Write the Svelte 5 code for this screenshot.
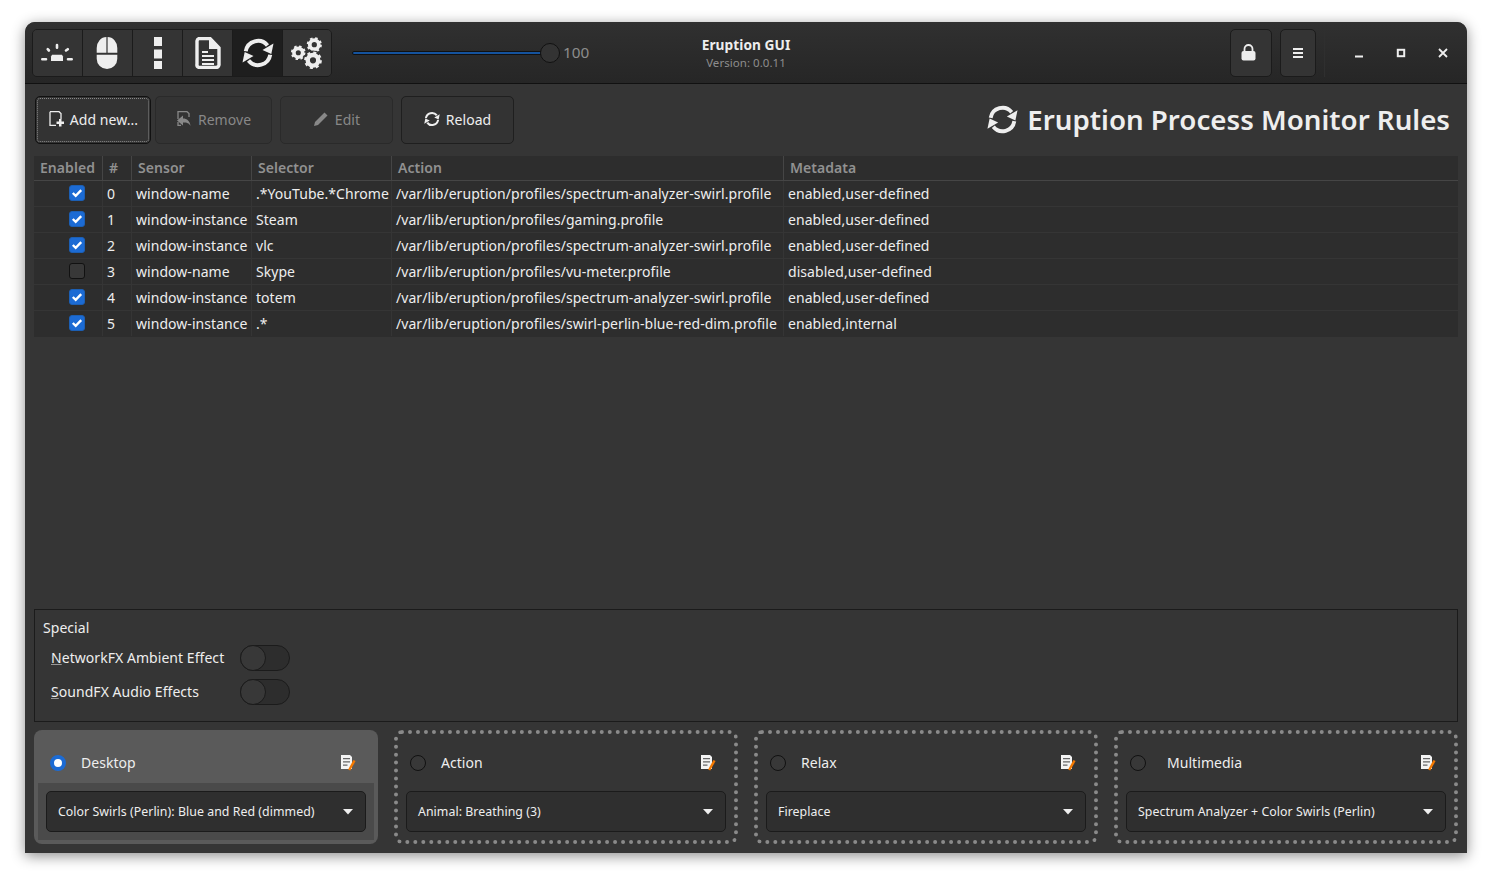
<script>
  const rows = [
    [true, 'window-name', '.*YouTube.*Chrome', '/var/lib/eruption/profiles/spectrum-analyzer-swirl.profile', 'enabled,user-defined'],
    [true, 'window-instance', 'Steam', '/var/lib/eruption/profiles/gaming.profile', 'enabled,user-defined'],
    [true, 'window-instance', 'vlc', '/var/lib/eruption/profiles/spectrum-analyzer-swirl.profile', 'enabled,user-defined'],
    [false, 'window-name', 'Skype', '/var/lib/eruption/profiles/vu-meter.profile', 'disabled,user-defined'],
    [true, 'window-instance', 'totem', '/var/lib/eruption/profiles/spectrum-analyzer-swirl.profile', 'enabled,user-defined'],
    [true, 'window-instance', '.*', '/var/lib/eruption/profiles/swirl-perlin-blue-red-dim.profile', 'enabled,internal']
  ];
  const slots = [
    { name: 'Desktop', profile: 'Color Swirls (Perlin): Blue and Red (dimmed)', active: true },
    { name: 'Action', profile: 'Animal: Breathing (3)', active: false },
    { name: 'Relax', profile: 'Fireplace', active: false },
    { name: 'Multimedia', profile: 'Spectrum Analyzer + Color Swirls (Perlin)', active: false, wide: true }
  ];
</script>

{#snippet sync(size)}
  <svg width={size} height={size} viewBox="0 0 32 32" class="ic">
    <path d="M3.800 14.300A12.300 12.300 0 0 1 25.500 8.500" fill="none" stroke="currentColor" stroke-width="4"/>
    <path d="M31.500 6.500L29.300 17L20.500 13Z" fill="currentColor"/>
    <path d="M28.200 17.700A12.300 12.300 0 0 1 6.500 23.500" fill="none" stroke="currentColor" stroke-width="4"/>
    <path d="M.5 25.500L2.700 15L11.500 19Z" fill="currentColor"/>
  </svg>
{/snippet}

{#snippet gear(cx, cy, r)}
  <circle cx={cx} cy={cy} r={r * 0.6} fill="none" stroke="#eee" stroke-width={r * 0.5}/>
  <circle cx={cx} cy={cy} r={r * 0.85} fill="none" stroke="#eee" stroke-width={r * 0.32} stroke-dasharray={`${r * 0.334} ${r * 0.334}`}/>
{/snippet}

{#snippet docEdit()}
  <svg class="docedit" width="16" height="16" viewBox="0 0 16 16">
    <path d="M1 0H10L12 2V14H1Z" fill="#f4f4f4"/>
    <path d="M3 3.700H10M3 6.900H10M3 10.100H7.500" stroke="#666" stroke-width="1.200"/>
    <path d="M9.200 15L14.500 5.500" stroke="#f57900" stroke-width="2.400"/>
  </svg>
{/snippet}

<div class="page">
<div class="window">
  <header class="bar">
    <div class="stack">
      <button class="seg">
        <svg class="bright" width="32" height="32" viewBox="0 0 32 32">
          <path d="M10 24V19.500L11 17.700H21L22 19.500V24Z" fill="#eee"/>
          <path d="M16 8V10.700M6.700 12.200L7.900 13.500M26.800 12.200L25 13.500M1.300 22.300H5M27 22.300H30.700" stroke="#eee" stroke-width="2.600" stroke-linecap="round"/>
        </svg>
      </button>
      <button class="seg">
        <svg width="32" height="32" viewBox="0 0 32 32">
          <path d="M14.400 0A9.700 11 0 0 0 4.700 11V15.700H14.400ZM15.600 0A9.700 11 0 0 1 25.300 11V15.700H15.600ZM4.700 17.700H25.300V21.700A10.300 10.300 0 0 1 4.700 21.700Z" fill="#eee"/>
        </svg>
      </button>
      <button class="seg">
        <svg width="32" height="32" viewBox="0 0 32 32">
          <path d="M12 0H20V9H12ZM12 12.500H20V21.500H12ZM12 24H20V32H12Z" fill="#eee"/>
        </svg>
      </button>
      <button class="seg">
        <svg width="32" height="32" viewBox="0 0 32 32">
          <path d="M7 1.500H18L27 11V27A3 3 0 0 1 24 30.500H7A3 3 0 0 1 5 27V4A3 3 0 0 1 7 1.500Z" fill="none" stroke="#eee" stroke-width="3.400"/>
          <path d="M17 1V12H27Z" fill="#eee"/>
          <path d="M10 15H16M10 19H22M10 23H22M10 27H22" stroke="#eee" stroke-width="2"/>
        </svg>
      </button>
      <button class="seg on">{@render sync(32)}</button>
      <button class="seg">
        <svg width="32" height="32" viewBox="0 0 32 32">
          {@render gear(7.300, 15.700, 7.300)}
          {@render gear(23.300, 7.700, 7.500)}
          <circle cx="22" cy="23.300" r="9.800" fill="#343434"/>
          {@render gear(22, 23.300, 8.800)}
        </svg>
      </button>
    </div>
    <div class="scale">
      <div class="trough"></div>
      <div class="knob"></div>
    </div>
    <span class="scaleval">100</span>
    <div class="titles">
      <div class="t1">Eruption GUI</div>
      <div class="t2">Version: 0.0.11</div>
    </div>
    <div class="hdr-right">
      <button class="hbtn lock">
        <svg width="15" height="17" viewBox="0 0 15 17">
          <path d="M3.500 7.500V5A4 4 0 0 1 11.500 5V7.500" fill="none" stroke="#eee" stroke-width="1.800"/>
          <rect x="0.500" y="7" width="14" height="9.500" rx="2" fill="#eee"/>
        </svg>
      </button>
      <button class="hbtn menu">
        <svg width="10" height="10" viewBox="0 0 10 10">
          <path d="M0 1H10M0 5H10M0 9H10" stroke="#eee" stroke-width="1.800"/>
        </svg>
      </button>
      <span class="sep"></span>
      <button class="wc"><svg width="10" height="10" viewBox="0 0 10 10"><path d="M1 8.500H9" stroke="#eee" stroke-width="2"/></svg></button>
      <button class="wc"><svg width="10" height="10" viewBox="0 0 10 10"><rect x="1.800" y="1.800" width="6.400" height="6.400" fill="none" stroke="#eee" stroke-width="2"/></svg></button>
      <button class="wc"><svg width="10" height="10" viewBox="0 0 10 10"><path d="M1 1L9 9M9 1L1 9" stroke="#eee" stroke-width="1.800"/></svg></button>
    </div>
  </header>

  <main class="content">
    <div class="toolbar">
      <button class="tb add">
        <svg width="16" height="16" viewBox="0 0 16 16">
          <path d="M2 .700H11L13 2.500V8M8 14.300H2V.700" fill="none" stroke="#eee" stroke-width="1.300"/>
          <path d="M11 8V10.500H8.500V13H11V15.500H13.500V13H16V10.500H13.500V8Z" fill="#eee"/>
        </svg>
        Add new...
      </button>
      <button class="tb dis rem">
        <svg width="16" height="16" viewBox="0 0 16 16">
          <path d="M2 8V.700H11L13 2.500V6M2 11V14.300H5" fill="none" stroke="#888" stroke-width="1.300"/>
          <path d="M1 9.500L7 4.500V7.500C11 7.500 14 10 14.500 15C13 12 11 11.500 7 11.500V14.500Z" fill="#888"/>
        </svg>
        Remove
      </button>
      <button class="tb dis edit">
        <svg width="16" height="16" viewBox="0 0 16 16">
          <path d="M1 15L2 11L11.500 1.500L14.500 4.500L5 14Z" fill="#888"/>
        </svg>
        Edit
      </button>
      <button class="tb rel">{@render sync(16)} Reload</button>
      <h1 class="heading">{@render sync(31)} <span>Eruption Process Monitor Rules</span></h1>
    </div>

    <div class="table">
      <div class="tr th">
        <div class="c">Enabled</div><div class="c">#</div><div class="c">Sensor</div><div class="c">Selector</div><div class="c">Action</div><div class="c">Metadata</div>
      </div>
      {#each rows as r, i}
        <div class="tr td">
          <div class="c chk">
            {#if r[0]}
              <span class="check on"><svg width="12" height="12" viewBox="0 0 12 12"><path d="M1.800 6L4.700 8.800L10.200 3.200" fill="none" stroke="#fff" stroke-width="2.400"/></svg></span>
            {:else}
              <span class="check"></span>
            {/if}
          </div>
          <div class="c">{i}</div><div class="c">{r[1]}</div><div class="c">{r[2]}</div><div class="c">{r[3]}</div><div class="c">{r[4]}</div>
        </div>
      {/each}
    </div>

    <div class="spacer"></div>

    <section class="special">
      <div class="sp-title">Special</div>
      <div class="sp-row"><span class="sp-label"><u>N</u>etworkFX Ambient Effect</span><span class="switch"><i></i></span></div>
      <div class="sp-row"><span class="sp-label"><u>S</u>oundFX Audio Effects</span><span class="switch"><i></i></span></div>
    </section>

    <div class="slots">
      {#each slots as s}
        <div class="slot" class:active={s.active}>
          <div class="slot-head">
            <span class="radio" class:sel={s.active} class:wide={s.wide}></span>
            <span class="slot-name">{s.name}</span>
            {@render docEdit()}
          </div>
          <div class="slot-body">
            <div class="combo">
              <span class="combo-text">{s.profile}</span>
              <svg width="10" height="6" viewBox="0 0 10 6"><path d="M0 0H10L5 5.500Z" fill="#eee"/></svg>
            </div>
          </div>
        </div>
      {/each}
    </div>
  </main>
</div>
</div>

<style>
  :global(body) { background: #fff; margin: 0; }
  .page { height: 881px; box-sizing: border-box; padding: 22px 25px 0; overflow: hidden; }
  .window {
    width: 1442px; height: 831px;
    border-radius: 10px 10px 0 0;
    background: #353535; color: #eee;
    box-shadow: 0 3px 14px rgba(0,0,0,.45);
    font-family: "Noto Sans", sans-serif; font-size: 14px;
    letter-spacing: .05px;
    display: flex; flex-direction: column; overflow: hidden;
  }
  button { font: inherit; color: inherit; padding: 0; letter-spacing: inherit; }
  svg { display: block; flex: none; }
  .bar {
    height: 61px; flex: none; box-sizing: content-box;
    border-bottom: 1px solid #111;
    background: linear-gradient(#303030, #262626);
    display: flex; align-items: center; padding-left: 7px; padding-right: 3px; position: relative;
  }
  .stack {
    display: flex; height: 48px; border: 1px solid #1b1b1b; border-radius: 5px; overflow: hidden; box-sizing: border-box;
  }
  .seg {
    width: 50px; border: 0; border-right: 1px solid #1b1b1b; background: #343434;
    display: flex; align-items: center; justify-content: center;
  }
  .seg:last-child { border-right: 0; width: 48px; }
  .seg.on { background: #1e1e1e; color: #eee; }
  .bright { margin-right: 2px; }
  .scale { width: 208px; height: 22px; margin-left: 20px; position: relative; }
  .trough { position: absolute; left: 0; right: 8px; top: 9px; height: 4px; border-radius: 2px; background: #15539e; border: 1px solid #111; box-sizing: border-box; }
  .knob { position: absolute; right: 0; top: 1px; width: 20px; height: 20px; border-radius: 50%; background: #333; border: 1px solid #111; box-sizing: border-box; }
  .scaleval { margin-left: 3px; margin-top: -2px; color: #8d8d8d; font-size: 15.300px; }
  .titles { position: absolute; left: 621px; width: 200px; top: 14px; text-align: center; }
  .t1 { font-weight: 700; font-size: 13.700px; line-height: 18px; }
  .t2 { font-size: 11.500px; line-height: 18px; color: #8d8d8d; }
  .hdr-right { margin-left: auto; display: flex; align-items: center; height: 48px; }
  .hbtn { height: 48px; border: 1px solid #1b1b1b; border-radius: 5px; background: #343434; display: flex; align-items: center; justify-content: center; box-sizing: border-box; }
  .lock { width: 42px; margin-right: 8px; padding-right: 5px; }
  .menu { width: 36px; }
  .sep { width: 1px; height: 48px; background: #2f2f2f; margin: 0 13px 0 8px; }
  .wc { width: 42px; height: 48px; border: 0; background: none; display: flex; align-items: center; justify-content: center; }
  .content { flex: 1; display: flex; flex-direction: column; padding: 12px 9px 9px; min-height: 0; }
  .toolbar { display: flex; align-items: center; height: 48px; flex: none; padding-left: 1px; }
  .tb {
    height: 48px; box-sizing: border-box; border: 1px solid #1f1f1f; border-radius: 5px; background: #333;
    display: flex; align-items: center; justify-content: center; gap: 6px; font-size: 14px; padding-bottom: 2px;
  }
  .add { width: 116px; margin-right: 4px; outline: 1px dotted #888; outline-offset: -3px; border-color: #111; }
  .rem { width: 117px; margin-right: 8px; }
  .edit { width: 113px; margin-right: 8px; }
  .rel { width: 113px; }
  .dis { color: #888; border-color: #2a2a2a; }
  .heading { margin: 0 0 0 auto; padding: 0 8px 2px 0; display: flex; align-items: center; gap: 9px; font-size: 27.700px; font-weight: 600; line-height: 46px; letter-spacing: 0; }
  .table { margin-top: 12px; background: #2d2d2d; flex: none; }
  .tr { display: grid; grid-template-columns: 69px 29px 120px 140px 392px 1fr; }
  .th { height: 25px; box-sizing: border-box; border-bottom: 1px solid #454545; color: #919191; font-weight: 600; font-size: 14px; line-height: 24px; }
  .th .c { padding-left: 6px; border-right: 1px solid #454545; height: 24px; box-sizing: border-box; }
  .th .c:last-child { border-right: 0; }
  .td { height: 26px; box-sizing: border-box; border-bottom: 1px solid #353535; line-height: 25px; font-size: 14px; }
  .td:last-child { border-bottom: 0; }
  .td .c { padding-left: 4px; white-space: nowrap; overflow: hidden; border-right: 1px solid #353535; box-sizing: border-box; height: 25px; }
  .td .c:last-child { border-right: 0; }
  .td .chk { padding-left: 35px; padding-top: 4px; line-height: 0; }
  .check { display: flex; align-items: center; justify-content: center; width: 16px; height: 16px; box-sizing: border-box; border: 1px solid #111; border-radius: 3px; background: #383838; }
  .check.on { background: #1c6bd4; border-color: #1c5fb4; }
  .spacer { flex: 1; }
  .special { flex: none; height: 113px; box-sizing: border-box; border: 1px solid #1b1b1b; padding: 8px 8px; }
  .sp-title { line-height: 19px; font-size: 14px; margin-bottom: 8px; }
  .sp-row { display: flex; align-items: center; height: 26px; margin-bottom: 8px; padding-left: 8px; font-size: 14px; }
  .sp-label { width: 189px; margin-top: -2px; }
  .sp-label u { text-decoration-color: #999; }
  .switch { width: 50px; height: 26px; border-radius: 13px; box-sizing: border-box; border: 1px solid #1b1b1b; background: #2d2d2d; position: relative; }
  .switch i { position: absolute; left: -1px; top: -1px; width: 26px; height: 26px; border-radius: 50%; box-sizing: border-box; border: 1px solid #1b1b1b; background: #383838; }
  .slots { flex: none; display: grid; grid-template-columns: repeat(4, 344px); justify-content: space-between; margin-top: 8px; }
  .slot { height: 114px; box-sizing: border-box; border: 4px dotted #8a8a8a; border-radius: 8px; display: flex; flex-direction: column; }
  .slot.active { border-color: transparent; background: #5a5a5a; }
  .slot-head { height: 49px; flex: none; display: flex; align-items: center; padding: 8px 8px 0 12px; box-sizing: border-box; position: relative; }
  .radio { width: 16px; height: 16px; border-radius: 50%; box-sizing: border-box; border: 1px solid #111; background: #383838; margin-right: 15px; }
  .radio.wide { margin-right: 21px; }
  .radio.sel { background: #fff; border: 4px solid #1c6bd4; }
  .slot-name { flex: 1; font-size: 14px; }
  .docedit { margin-right: 10px; margin-top: 1px; }
  .slot-body { flex: 1; padding: 8px; }
  .slot.active .slot-body { background: #4a4a4a; }
  .combo { height: 41px; box-sizing: border-box; border: 1px solid #1b1b1b; border-radius: 5px; background: #2f2f2f; display: flex; align-items: center; justify-content: space-between; padding: 0 12px 0 11px; font-size: 12.350px; }
</style>
